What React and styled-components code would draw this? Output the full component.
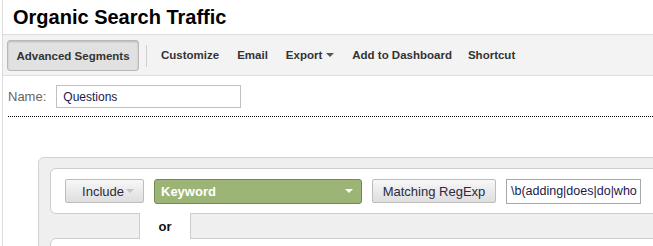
import React from 'react';
import styled, { createGlobalStyle } from 'styled-components';

const Global = createGlobalStyle`
  html, body {
    margin: 0;
    padding: 0;
    background: #fff;
    overflow: hidden;
  }
  body {
    font-family: "Liberation Sans", Arial, sans-serif;
  }
`;

const Page = styled.div`
  margin-left: 2px;
  border-left: 1px solid #dcdcdc;
  height: 246px;
  overflow: hidden;
`;

const Title = styled.h1`
  margin: 0;
  padding: 5px 0 5px 10px;
  font-size: 20px;
  line-height: 24px;
  font-weight: bold;
  color: #000;
`;

const Toolbar = styled.div`
  display: flex;
  align-items: center;
  height: 40px;
  padding-left: 4px;
  background: #f3f3f3;
  border-top: 1px solid #dedede;
  border-bottom: 1px solid #dedede;
`;

const SegmentButton = styled.button`
  width: 132px;
  height: 31px;
  margin-top: 1px;
  border: 1px solid #b8b8b8;
  border-radius: 3px;
  background: #e1e1e1;
  box-shadow: inset 0 1px 2px rgba(0, 0, 0, 0.18);
  font-family: inherit;
  font-size: 11.5px;
  font-weight: bold;
  color: #333;
  padding: 0;
`;

const Divider = styled.span`
  width: 1px;
  height: 22px;
  margin: 1px 14px 0 7px;
  background: #cfcfcf;
`;

const ToolLink = styled.a`
  display: inline-flex;
  align-items: center;
  gap: 4px;
  margin-right: ${(p) => p.$gap || 18}px;
  font-size: 11.5px;
  font-weight: bold;
  color: #333;
  cursor: pointer;
`;

const Caret = styled.span`
  width: 0;
  height: 0;
  border-left: 4px solid transparent;
  border-right: 4px solid transparent;
  border-top: 4px solid ${(p) => p.$color || '#555'};
`;

const NameRow = styled.div`
  display: flex;
  align-items: center;
  margin: 9px 0 0 5px;
  gap: 10px;
`;

const Label = styled.label`
  font-size: 13px;
  color: #666;
`;

const TextField = styled.div`
  box-sizing: border-box;
  width: ${(p) => p.$w}px;
  height: ${(p) => p.$h || 23}px;
  padding-left: ${(p) => p.$pad || 6}px;
  border: 1px solid ${(p) => p.$border || '#c0c0c0'};
  background: #fff;
  display: flex;
  align-items: center;
  font-size: ${(p) => p.$size || 12}px;
  color: #1a1a4a;
  white-space: nowrap;
  overflow: hidden;
`;

const Dotted = styled.div`
  margin: 8px 0 0 5px;
  border-top: 1px dotted #000;
`;

const Panel = styled.div`
  margin: 40px -40px 0 35px;
  padding: 10px 0 0 11px;
  background: #efefef;
  border: 1px solid #d2d2d2;
  border-radius: 6px;
`;

const Condition = styled.div`
  display: flex;
  align-items: center;
  height: ${(p) => p.$h || 44}px;
  padding-left: 14px;
  background: #fff;
  border: 1px solid #cdcdcd;
  border-radius: 6px;
  gap: 10px;
`;

const GreyButton = styled.button`
  display: flex;
  align-items: center;
  justify-content: ${(p) => p.$justify || 'center'};
  gap: 2px;
  box-sizing: border-box;
  width: ${(p) => p.$w}px;
  height: 24px;
  padding: 0 ${(p) => p.$padRight || 0}px 0 0;
  border: 1px solid #bdbdbd;
  border-radius: 2px;
  background: linear-gradient(#f7f7f7, #dedede);
  font-family: inherit;
  font-size: 13px;
  color: #2b2b40;
`;

const KeywordSelect = styled.div`
  box-sizing: border-box;
  display: flex;
  align-items: center;
  justify-content: space-between;
  width: 208px;
  height: 25px;
  padding: 0 8px 0 6px;
  background: #9cb577;
  border: 1px solid #6f8c4b;
  border-radius: 3px;
  font-size: 13px;
  font-weight: bold;
  color: #fff;
`;

const OrRow = styled.div`
  display: flex;
  height: 24px;
`;

const Connector = styled.div`
  position: relative;
  z-index: 1;
  box-sizing: border-box;
  width: 52px;
  height: 26px;
  margin: -1px 0 -1px 89px;
  background: #fff;
  border-left: 1px solid #cdcdcd;
  border-right: 1px solid #cdcdcd;
  display: flex;
  align-items: center;
  justify-content: center;
  font-size: 13px;
  font-weight: bold;
  color: #111;
`;

export default function App() {
  return (
    <>
      <Global />
      <Page>
        <Title>Organic Search Traffic</Title>
        <Toolbar>
          <SegmentButton>Advanced Segments</SegmentButton>
          <Divider />
          <ToolLink $gap={18}>Customize</ToolLink>
          <ToolLink $gap={18}>Email</ToolLink>
          <ToolLink $gap={18}>
            Export <Caret />
          </ToolLink>
          <ToolLink $gap={16}>Add to Dashboard</ToolLink>
          <ToolLink>Shortcut</ToolLink>
        </Toolbar>
        <NameRow>
          <Label>Name:</Label>
          <TextField $w={185}>Questions</TextField>
        </NameRow>
        <Dotted />
        <Panel>
          <Condition>
            <GreyButton $w={79} $justify="flex-end" $padRight={9}>
              Include <Caret $color="#c4c4c4" />
            </GreyButton>
            <KeywordSelect>
              Keyword
              <Caret $color="#fff" />
            </KeywordSelect>
            <GreyButton $w={124}>Matching RegExp</GreyButton>
            <TextField $w={135} $h={25} $pad={4} $size={12.5} $border="#a8a8a8">
              \b(adding|does|do|who
            </TextField>
          </Condition>
          <OrRow>
            <Connector>or</Connector>
          </OrRow>
          <Condition $h={40} />
        </Panel>
      </Page>
    </>
  );
}
